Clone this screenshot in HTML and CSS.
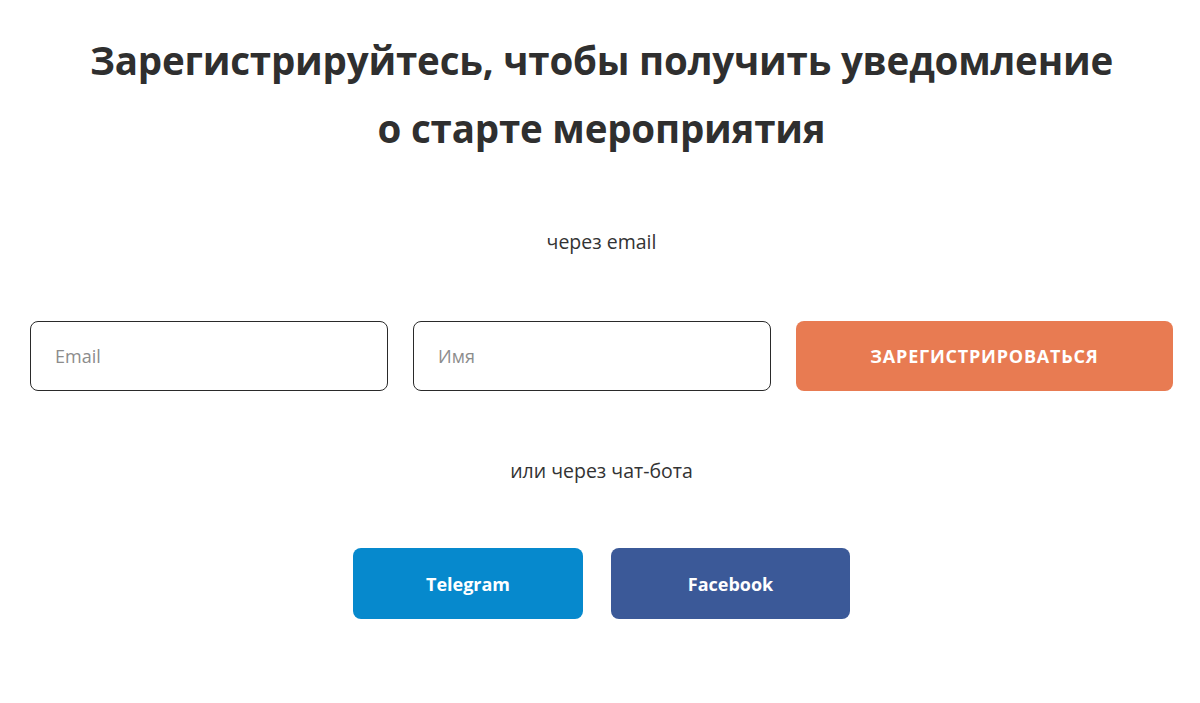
FILE: index.html
```html
<!DOCTYPE html>
<html lang="ru">

<head>
    <meta charset="UTF-8" />
    <meta name="viewport" content="width=device-width, initial-scale=1.0" />
    <title>Регистрация на мероприятие</title>
    <link rel="stylesheet" href="styles.css">
</head>

<body>
    <section class="signup">
        <h1>Зарегистрируйтесь, чтобы получить уведомление<br>о старте мероприятия</h1>

        <p class="label label-email">через email</p>
        <form class="info" autocomplete="off">
            <input type="text" class="email" name="email" placeholder="Email" />
            <input type="text" class="uname" name="uname" placeholder="Имя" />
            <button class="submit" type="button">Зарегистрироваться</button>
        </form>

        <p class="label label-bot">или через чат-бота</p>
        <div class="bots">
            <a href="javascript:" class="bot telegram">Telegram</a>
            <a href="javascript:" class="bot facebook">Facebook</a>
        </div>
    </section>
</body>

</html>
```

FILE: styles.css
```css
* {
margin: 0;
padding: 0;
box-sizing: border-box;
}

body {
font-family: "Open Sans", "Noto Sans", sans-serif;
color: #333;
background: #fff;
}

a {
text-decoration: none;
}

.signup {
padding: 26px 27px 0 30px;
text-align: center;
}

h1 {
font-size: 38.5px;
line-height: 68px;
font-weight: 700;
color: #2f2f2f;
letter-spacing: -0.2px;
}

.label {
font-size: 19.5px;
line-height: 26px;
color: #333;
}

.label-email {
margin-top: 67px;
}

.info {
display: grid;
grid-template-columns: 358px 358px 1fr;
gap: 25px;
margin-top: 66px;
}

.info input {
height: 70px;
border: 1px solid #2a2a2a;
border-radius: 8px;
padding-left: 24px;
font-family: inherit;
font-size: 18px;
color: #333;
outline: none;
}

.info input::placeholder {
color: #8c8c8c;
}

.info .submit {
height: 70px;
border: 0;
border-radius: 8px;
background-color: #e87b52;
color: #fff;
font-family: inherit;
font-size: 18px;
font-weight: 700;
letter-spacing: 0.8px;
text-transform: uppercase;
cursor: pointer;
}

.label-bot {
margin-top: 67px;
}

.bots {
display: flex;
justify-content: center;
gap: 28px;
margin-top: 64px;
}

.bot {
display: flex;
align-items: center;
justify-content: center;
height: 71px;
border-radius: 8px;
color: #fff;
font-size: 18px;
font-weight: 700;
}

.telegram {
width: 230px;
background-color: #0689cd;
}

.facebook {
width: 239px;
background-color: #3b5998;
}
```
